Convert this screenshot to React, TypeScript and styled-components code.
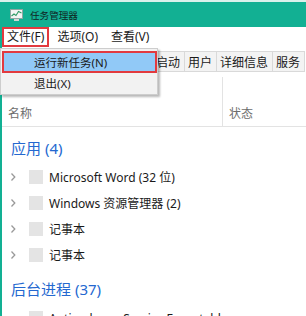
import React from 'react';
import styled, { createGlobalStyle } from 'styled-components';

const FONT = `"Noto Sans", "Noto Sans CJK SC", sans-serif`;
const TEAL = '#12b093';

const GlobalStyle = createGlobalStyle`
  html, body { margin: 0; padding: 0; background: #fff; }
  body { font-family: ${FONT}; }
`;

const Window = styled.div`
  position: relative;
  width: 306px;
  height: 316px;
  overflow: hidden;
  background: #fff;
  font-family: ${FONT};
  color: #1a1a1a;
  display: flex;
  flex-direction: column;
`;

const TitleBar = styled.div`
  flex-shrink: 0;
  height: 25px;
  border-top: 2px solid #d9f1eb;
  background: ${TEAL};
  display: flex;
  align-items: center;
  gap: 7px;
  padding-left: 10px;
  font-size: 9.6px;
  color: #0f241f;
`;

const Body = styled.div`
  flex: 1;
  border-left: 2px solid ${TEAL};
  display: flex;
  flex-direction: column;
`;

const MenuBar = styled.div`
  height: 20px;
  display: flex;
  gap: 3px;
  flex-shrink: 0;
`;

const MenuItem = styled.div<{ $active?: boolean }>`
  box-sizing: border-box;
  height: 20px;
  padding: 0 3px;
  border: 2px solid ${(p) => (p.$active ? '#e23a3f' : 'transparent')};
  font-size: 12px;
  line-height: 16px;
  display: flex;
  align-items: center;
`;

const TabStrip = styled.div`
  margin-top: 4px;
  height: 21px;
  display: flex;
  padding-left: 6px;
  flex-shrink: 0;
`;

const Tab = styled.div`
  box-sizing: border-box;
  height: 21px;
  padding: 0 4px 0 3px;
  background: #f3f3f3;
  border: 1px solid #d9d9d9;
  border-left: none;
  font-size: 12px;
  display: flex;
  align-items: center;
  white-space: nowrap;
  &:first-child { border-left: 1px solid #d9d9d9; }
`;

const ColumnHeader = styled.div`
  height: 54px;
  border-bottom: 1px solid #e3e3e3;
  display: grid;
  grid-template-columns: 220px 1fr;
  flex-shrink: 0;
`;

const HeaderCell = styled.div<{ $divider?: boolean }>`
  display: flex;
  align-items: flex-end;
  padding: 0 0 4px 6px;
  font-size: 12px;
  line-height: 16px;
  color: #6d6d6d;
  margin-top: ${(p) => (p.$divider ? '5px' : '0')};
  border-left: ${(p) => (p.$divider ? '1px solid #e3e3e3' : 'none')};
`;

const GroupHeader = styled.div`
  padding: 8px 0 3px 9px;
  font-size: 15px;
  line-height: 26px;
  height: 26px;
  color: #2468d0;
  flex-shrink: 0;
`;

const Row = styled.div`
  height: 26px;
  display: flex;
  align-items: center;
  padding-left: 8px;
  font-size: 12px;
  flex-shrink: 0;
  white-space: nowrap;
`;

const AppIcon = styled.div`
  width: 14px;
  height: 14px;
  background: #e4e4e4;
  margin-left: 13px;
  margin-right: 6px;
`;

const Dropdown = styled.div`
  position: absolute;
  left: 0;
  top: 48px;
  width: 158px;
  box-sizing: border-box;
  padding: 2px 0 0 1px;
  height: 47px;
  background: #f2f2f2;
  border: 1px solid #cdcdcd;
  box-shadow: 2px 2px 2px rgba(0, 0, 0, 0.28);
  display: flex;
  flex-direction: column;
`;

const DropItem = styled.div<{ $active?: boolean }>`
  box-sizing: border-box;
  width: 155px;
  height: 22px;
  padding-left: ${(p) => (p.$active ? '30px' : '32px')};
  background: ${(p) => (p.$active ? '#91c9f7' : 'transparent')};
  border: ${(p) => (p.$active ? '2px solid #e23a3f' : 'none')};
  font-size: 11.5px;
  display: flex;
  align-items: center;
  white-space: nowrap;
`;

const Chevron = () => (
  <svg width="6" height="10" viewBox="0 0 6 10">
    <path d="M1.5 1.5 L4.8 5 L1.5 8.5" fill="none" stroke="#9a9a9a" strokeWidth="1.3" />
  </svg>
);

const TaskIcon = () => (
  <svg width="13" height="12" viewBox="0 0 13 12">
    <rect x="0.5" y="0.5" width="12" height="9" fill="#f4f4f4" stroke="#8fa7a2" />
    <path d="M1.5 7 L4 5 L6 6.5 L8.5 2.5 L11.5 4" fill="none" stroke="#2f9a66" strokeWidth="1.1" />
    <rect x="4" y="10" width="5" height="2" fill="#d5d5d5" />
  </svg>
);

const apps = ['Microsoft Word (32 位)', 'Windows 资源管理器 (2)', '记事本', '记事本'];
const tabs = ['进程', '性能', '应用历史记录', '启动', '用户', '详细信息', '服务'];

export default function App() {
  return (
    <>
      <GlobalStyle />
      <Window>
        <TitleBar>
          <TaskIcon />
          <span>任务管理器</span>
        </TitleBar>
        <Body>
          <MenuBar>
            <MenuItem $active>文件(F)</MenuItem>
            <MenuItem>选项(O)</MenuItem>
            <MenuItem>查看(V)</MenuItem>
          </MenuBar>
          <TabStrip>
            {tabs.map((t) => (
              <Tab key={t}>{t}</Tab>
            ))}
          </TabStrip>
          <ColumnHeader>
            <HeaderCell>名称</HeaderCell>
            <HeaderCell $divider>状态</HeaderCell>
          </ColumnHeader>
          <GroupHeader>应用 (4)</GroupHeader>
          {apps.map((a, i) => (
            <Row key={i}>
              <Chevron />
              <AppIcon />
              <span>{a}</span>
            </Row>
          ))}
          <GroupHeader>后台进程 (37)</GroupHeader>
          <Row>
            <span style={{ width: 6 }} />
            <AppIcon />
            <span>Antimalware Service Executable</span>
          </Row>
        </Body>
        <Dropdown>
          <DropItem $active>运行新任务(N)</DropItem>
          <DropItem>退出(X)</DropItem>
        </Dropdown>
      </Window>
    </>
  );
}
